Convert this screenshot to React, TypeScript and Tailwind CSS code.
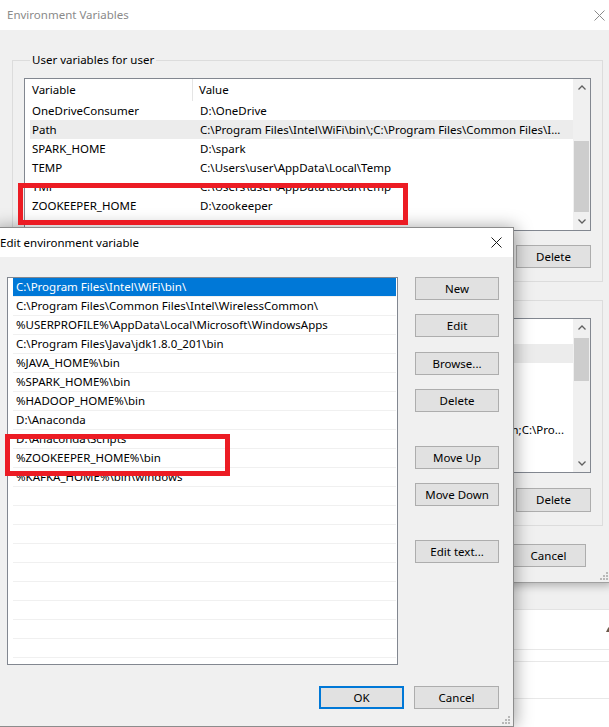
import React from "react"

const userVars: [string, string][] = [
  ["OneDriveConsumer", "D:\\OneDrive"],
  ["Path", "C:\\Program Files\\Intel\\WiFi\\bin\\;C:\\Program Files\\Common Files\\I..."],
  ["SPARK_HOME", "D:\\spark"],
  ["TEMP", "C:\\Users\\user\\AppData\\Local\\Temp"],
  ["TMP", "C:\\Users\\user\\AppData\\Local\\Temp"],
  ["ZOOKEEPER_HOME", "D:\\zookeeper"],
]

// only the tail of the Path value peeks out from behind the dialog
const systemVars: [string, string][] = [
  ["", ""],
  ["", ""],
  ["", ""],
  ["", ""],
  ["", "C:\\Windows\\system32;C:\\Windows;C:\\Windows\\System32\\Wbem;C:\\Pro..."],
  ["", ""],
]

const pathEntries = [
  "C:\\Program Files\\Intel\\WiFi\\bin\\",
  "C:\\Program Files\\Common Files\\Intel\\WirelessCommon\\",
  "%USERPROFILE%\\AppData\\Local\\Microsoft\\WindowsApps",
  "C:\\Program Files\\Java\\jdk1.8.0_201\\bin",
  "%JAVA_HOME%\\bin",
  "%SPARK_HOME%\\bin",
  "%HADOOP_HOME%\\bin",
  "D:\\Anaconda",
  "D:\\Anaconda\\Scripts",
  "%ZOOKEEPER_HOME%\\bin",
  "%KAFKA_HOME%\\bin\\windows",
]

function CloseIcon({ color }: { color: string }) {
  return (
    <svg width="11" height="11" viewBox="0 0 11 11">
      <path d="M0.5 0.5 L10.5 10.5 M10.5 0.5 L0.5 10.5" stroke={color} strokeWidth="1" fill="none" />
    </svg>
  )
}

function Chevron({ up }: { up?: boolean }) {
  return (
    <svg width="8" height="5" viewBox="0 0 8 5">
      <path d={up ? "M0.5 4.5 L4 1 L7.5 4.5" : "M0.5 0.5 L4 4 L7.5 0.5"} stroke="#606060" strokeWidth="1.3" fill="none" />
    </svg>
  )
}

function Grip() {
  return (
    <svg width="8" height="8" viewBox="0 0 8 8">
      <rect x="6" y="0" width="2" height="2" fill="#b8b8b8" />
      <rect x="3" y="3" width="2" height="2" fill="#b8b8b8" />
      <rect x="6" y="3" width="2" height="2" fill="#b8b8b8" />
      <rect x="0" y="6" width="2" height="2" fill="#b8b8b8" />
      <rect x="3" y="6" width="2" height="2" fill="#b8b8b8" />
      <rect x="6" y="6" width="2" height="2" fill="#b8b8b8" />
    </svg>
  )
}

function Button({ label, className = "", isDefault = false }: { label: string; className?: string; isDefault?: boolean }) {
  return (
    <div
      className={`h-[23px] flex items-center justify-center bg-[#e1e1e1] text-black ${
        isDefault ? "border-2 border-[#0078d7]" : "border border-[#adadad]"
      } ${className}`}
    >
      {label}
    </div>
  )
}

function VarList({
  rows,
  selected,
  alignEnd,
  showHeader,
  headerClass = "h-[22px]",
  track,
}: {
  rows: [string, string][]
  selected: number
  alignEnd?: boolean
  showHeader?: boolean
  headerClass?: string
  track: React.ReactNode
}) {
  return (
    <div className="flex-1 flex bg-white border border-[#828790] min-w-0">
      <div className="flex-1 min-w-0 flex flex-col overflow-hidden">
        <div className={`${headerClass} shrink-0 flex items-center`}>
          <div className="w-[168px] h-full flex items-center pl-[7px] border-r border-[#e5e5e5]">
            {showHeader ? "Variable" : ""}
          </div>
          <div className="pl-[6px]">{showHeader ? "Value" : ""}</div>
        </div>
        {rows.map(([name, value], i) => (
          <div key={i} className={`h-[19px] shrink-0 ml-[5px] flex items-center ${i === selected ? "bg-[#ececec]" : ""}`}>
            <div className="w-[170px] shrink-0 pl-[2px] whitespace-nowrap">{name}</div>
            <div className={`flex-1 min-w-0 flex pr-[9px] overflow-hidden whitespace-nowrap ${alignEnd ? "justify-end" : ""}`}>
              <span className="shrink-0">{value}</span>
            </div>
          </div>
        ))}
      </div>
      <div className="w-[17px] shrink-0 flex flex-col bg-[#f0f0f0]">
        <div className="h-[17px] flex items-center justify-center">
          <Chevron up />
        </div>
        {track}
        <div className="h-[17px] flex items-center justify-center">
          <Chevron />
        </div>
      </div>
    </div>
  )
}

export default function App() {
  return (
    <div className="relative w-[609px] h-[727px] overflow-hidden bg-white text-[11.5px] leading-[16px] text-black font-['Noto_Sans',sans-serif]">
      {/* window behind everything */}
      <div className="absolute left-0 top-[583px] w-[609px] h-[144px] flex flex-col bg-white">
        <div className="h-[27px] bg-[#f0f0f0] border-b border-[#e3e3e3]" />
        <div className="h-[40px] flex items-center justify-end border-b border-[#e8e8e8]">
          <svg width="5" height="5" viewBox="0 0 5 5" className="mr-[-2px]">
            <path d="M2.5 0 L5 5 L0 5 Z" fill="#6b5a4a" />
          </svg>
        </div>
        <div className="h-[12px] border-b border-[#e8e8e8]" />
        <div className="h-[37px] border-b border-[#e8e8e8]" />
      </div>

      {/* Environment Variables window */}
      <div className="absolute left-0 top-0 w-[612px] h-[583px] flex flex-col bg-[#f0f0f0] border-b border-[#a0a0a0] shadow-[0_3px_8px_rgba(0,0,0,0.25)]">
        <div className="h-[30px] shrink-0 bg-white flex items-center justify-between pl-[7px] pr-[7px] text-[#8a8a8a]">
          <span>Environment Variables</span>
          <CloseIcon color="#8a8a8a" />
        </div>
        <div className="flex flex-col pl-[12px] pr-[9px] pt-[22px]">
          <fieldset className="min-w-0 border border-[#dcdcdc] pl-[11px] pr-[11px] pt-[10px] pb-[13px]">
            <legend className="ml-[6px] px-[2px] leading-[16px]">User variables for user</legend>
            <div className="h-[153px] flex">
              <VarList
                rows={userVars}
                selected={1}
                showHeader
                track={
                  <div className="flex-1 flex flex-col">
                    <div className="h-[45px]" />
                    <div className="h-[71px] mx-[1px] bg-[#cdcdcd]" />
                  </div>
                }
              />
            </div>
            <div className="flex justify-end mt-[14px]">
              <Button label="Delete" className="w-[75px]" />
            </div>
          </fieldset>

          <fieldset className="min-w-0 mt-[18px] border border-[#dcdcdc] pl-[11px] pr-[11px] pt-[17px] pb-[13px]">
            <div className="h-[155px] flex">
              <VarList
                rows={systemVars}
                selected={0}
                alignEnd
                headerClass="h-[25px]"
                track={
                  <div className="flex-1 flex flex-col">
                    <div className="h-[2px]" />
                    <div className="h-[43px] mx-[1px] bg-[#cdcdcd]" />
                  </div>
                }
              />
            </div>
            <div className="flex justify-end mt-[15px]">
              <Button label="Delete" className="w-[75px] h-[24px]" />
            </div>
          </fieldset>

          <div className="flex justify-end mt-[18px] pr-[17px]">
            <Button label="Cancel" className="w-[75px]" />
          </div>
        </div>
        <div className="flex-1 flex items-end justify-end pr-[4px] pb-[2px]">
          <Grip />
        </div>
      </div>

      {/* Edit environment variable dialog */}
      <div className="absolute left-[-8px] top-[227px] w-[522px] h-[500px] flex flex-col bg-[#f0f0f0] border border-[#8c8c8c] shadow-[2px_0_16px_rgba(0,0,0,0.35)]">
        <div className="h-[29px] shrink-0 bg-white flex items-center justify-between pl-[7px] pr-[11px]">
          <span>Edit environment variable</span>
          <CloseIcon color="#1a1a1a" />
        </div>
        <div className="flex pt-[20px] pl-[14px] pr-[14px]">
          <div className="w-[392px] h-[388px] flex flex-col bg-white border border-[#828790] pl-[5px] pr-[1px] overflow-hidden">
            {pathEntries.map((p, i) => (
              <div
                key={p}
                className={`h-[19px] shrink-0 flex items-center pl-[3px] border-b border-[#f0f0f0] whitespace-nowrap ${
                  i === 0 ? "bg-[#0078d7] text-white" : ""
                }`}
              >
                {p}
              </div>
            ))}
            {Array.from({ length: 10 }).map((_, i) => (
              <div key={i} className="h-[19px] shrink-0 border-b border-[#f0f0f0]" />
            ))}
          </div>
          <div className="ml-[17px] w-[84px] flex flex-col">
            <Button label="New" />
            <Button label="Edit" className="mt-[14px]" />
            <Button label="Browse..." className="mt-[15px]" />
            <Button label="Delete" className="mt-[14px]" />
            <Button label="Move Up" className="mt-[34px]" />
            <Button label="Move Down" className="mt-[14px]" />
            <Button label="Edit text..." className="mt-[34px]" />
          </div>
        </div>
        <div className="flex justify-end mt-[21px] pr-[14px]">
          <Button label="OK" isDefault className="w-[85px] mr-[10px]" />
          <Button label="Cancel" className="w-[85px]" />
        </div>
        <div className="flex-1 flex items-end justify-end pr-[3px] pb-[2px]">
          <Grip />
        </div>
      </div>

      {/* red annotation boxes */}
      <div className="absolute left-[18px] top-[183px] w-[390px] h-[42px] border-[5px] border-[#ec1c24]" />
      <div className="absolute left-[5px] top-[434px] w-[225px] h-[42px] border-[5px] border-[#ec1c24]" />
    </div>
  )
}
